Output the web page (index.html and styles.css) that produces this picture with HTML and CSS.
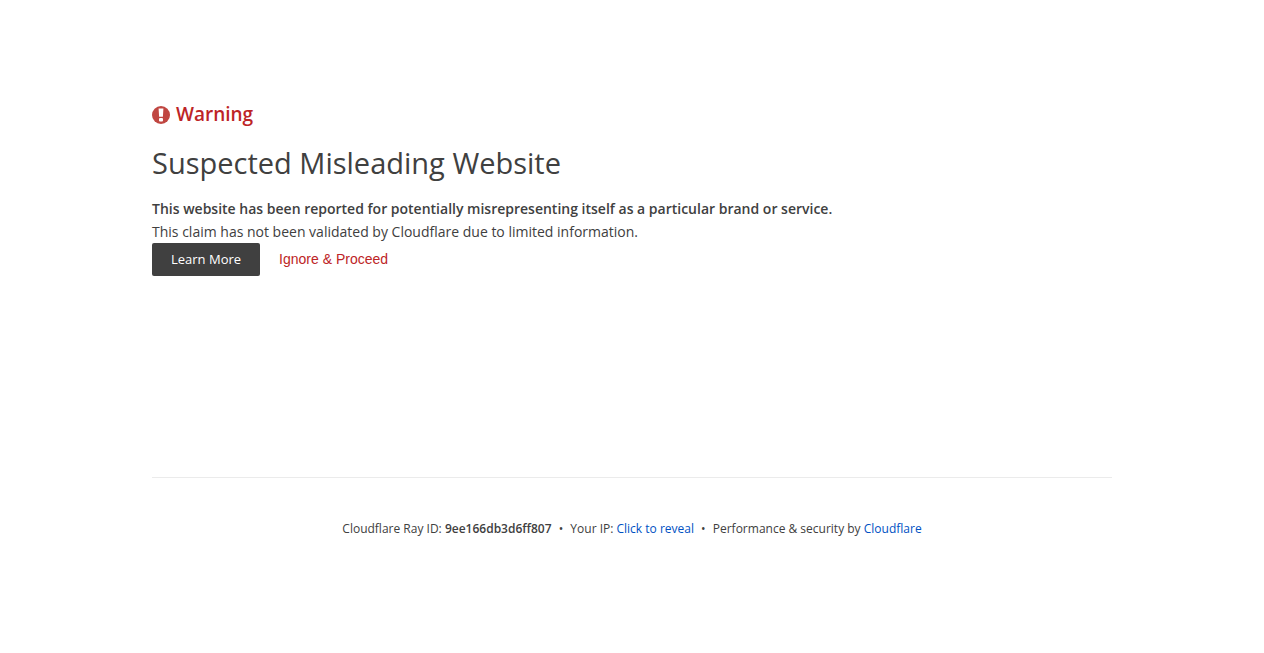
FILE: index.html
```html
<!DOCTYPE html>
<html lang="en-US">
  <head>
    <meta charset="utf-8" />
    <meta name="viewport" content="width=device-width, initial-scale=1" />
    <title>Suspected Misleading Website | Cloudflare</title>
    <link rel="stylesheet" href="styles.css">
  </head>
  <body>
    <div class="wrapper">
      <header class="header">
        <h1 class="warning">
          <svg class="icon-warning" viewBox="0 0 18 18" aria-hidden="true">
            <circle cx="9" cy="9" r="9" fill="#c04641" />
            <path d="M6.6 2.6h4.8l-.5 8.2H7.1z" fill="#fff" />
            <rect x="7" y="12" width="4" height="3.4" rx="1" fill="#fff" />
          </svg>
          <span>Warning</span>
        </h1>
        <h2 class="subheadline">Suspected Misleading Website</h2>
      </header>

      <main class="section">
        <p><strong>This website has been reported for potentially misrepresenting itself as a particular brand or service.</strong></p>
        <p>This claim has not been validated by Cloudflare due to limited information.</p>
        <form class="actions">
          <a class="btn-learn-more" href="https://www.cloudflare.com/learning/access-management/phishing-attack/">Learn More</a>
          <button type="submit" class="btn-bypass">Ignore &amp; Proceed</button>
        </form>
      </main>

      <footer class="footer">
        <span>Cloudflare Ray ID: <strong>9ee166db3d6ff807</strong></span>
        <span class="separator">&bull;</span>
        <span>Your IP: <button type="button" class="btn-reveal">Click to reveal</button></span>
        <span class="separator">&bull;</span>
        <span>Performance &amp; security by <a href="https://www.cloudflare.com/5xx-error-landing">Cloudflare</a></span>
      </footer>
    </div>
  </body>
</html>
```
FILE: styles.css
```css
* {
  box-sizing: border-box;
}

body {
  margin: 0;
  background: #fff;
  color: #404040;
  font-family: "Segoe UI", "Open Sans", "Noto Sans", sans-serif;
  font-size: 14px;
  line-height: 23px;
}

.wrapper {
  max-width: 960px;
  margin: 0 auto;
  padding-top: 100px;
}

.warning {
  display: flex;
  align-items: center;
  gap: 6px;
  margin: 0;
  color: #bd2426;
  font-size: 19px;
  font-weight: 600;
  line-height: 29px;
}

.icon-warning {
  width: 18px;
  height: 18px;
}

.subheadline {
  margin: 12px 0 0;
  font-size: 29px;
  font-weight: 400;
  line-height: 44px;
}

.section {
  padding-top: 12px;
}

.section p {
  margin: 0;
}

strong {
  font-weight: 600;
}

.actions {
  display: flex;
  align-items: center;
}

.btn-learn-more {
  padding: 5px 19px;
  border-radius: 2px;
  background: #404040;
  color: #fff;
  font-size: 13px;
  text-decoration: none;
}

.btn-bypass {
  padding: 5px 19px;
  border: 0;
  background: transparent;
  color: #bd2426;
  font-family: "Liberation Sans", Arial, sans-serif;
  font-size: 14px;
  line-height: 23px;
}

.footer {
  margin-top: 201px;
  padding: 41px 0;
  border-top: 1px solid #ebebeb;
  font-size: 12px;
  line-height: 20px;
  text-align: center;
}

.footer a,
.btn-reveal {
  color: #0051c3;
  text-decoration: none;
}

.btn-reveal {
  padding: 0;
  border: 0;
  background: transparent;
  font: inherit;
}

.separator {
  margin: 0 4px;
}
```
